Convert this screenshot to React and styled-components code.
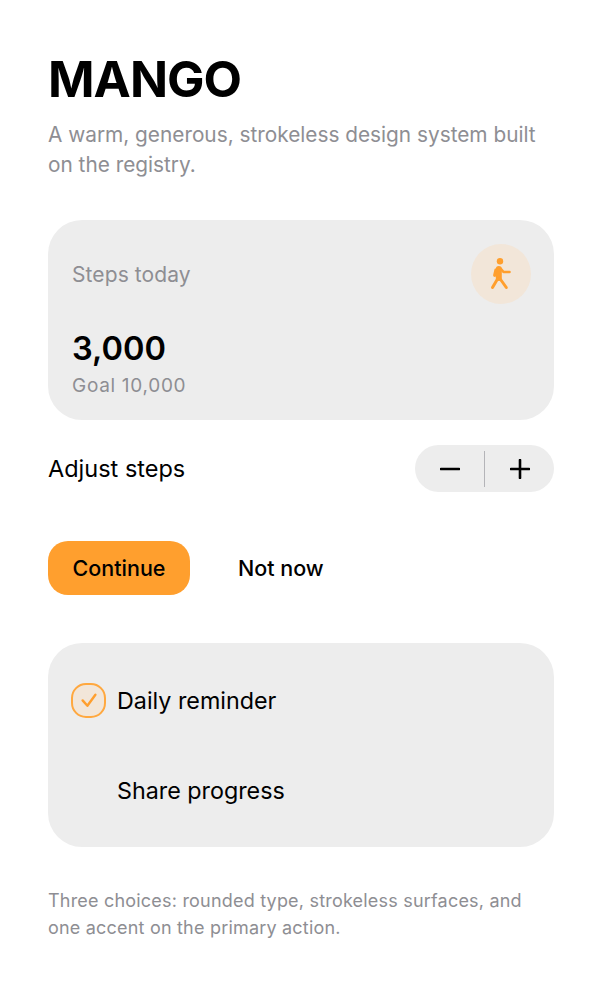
import React from "react";
import styled, { createGlobalStyle } from "styled-components";

const Global = createGlobalStyle`
  html, body { margin: 0; background: #fff; }
  body { font-family: Inter, "Noto Sans", sans-serif; color: #000; }
`;
const Page = styled.main`
  width: 603px; box-sizing: border-box; padding: 48px 49px 0 48px;
  display: flex; flex-direction: column;
`;
const Title = styled.h1`
  margin: 0; font-size: 50px; line-height: 62px; font-weight: 700; letter-spacing: -1px;
`;
const Subtitle = styled.p`
  margin: 10px 0 0; font-size: 20.8px; line-height: 30px; color: #8e8e93;
`;
const Card = styled.section`
  background: #ededed; border-radius: 34px; box-sizing: border-box;
`;
const StatCard = styled(Card)`
  margin-top: 40px; height: 200px; padding: 24px 23px 24px 24px;
  display: flex; flex-direction: column;
`;
const StatTop = styled.div`
  display: flex; justify-content: space-between; align-items: center;
`;
const StatLabel = styled.span`
  font-size: 21px; letter-spacing: 0.1px; color: #8e8e93;
`;
const IconCircle = styled.div`
  width: 60px; height: 60px; border-radius: 50%; background: #f2e6d9;
  display: flex; align-items: center; justify-content: center;
`;
const StatValue = styled.div`
  margin-top: 23px; font-size: 32.6px; line-height: 42px; font-weight: 600;
`;
const StatGoal = styled.div`
  margin-top: 4px; font-size: 19px; line-height: 26px; letter-spacing: 0.7px; color: #8e8e93;
`;
const AdjustRow = styled.div`
  margin-top: 25px; height: 47px; display: flex; align-items: center; justify-content: space-between;
`;
const AdjustLabel = styled.span`
  font-size: 23.5px;
`;
const Stepper = styled.div`
  width: 139px; height: 47px; border-radius: 24px; background: #ededed;
  display: flex; align-items: center; position: relative;
`;
const StepButton = styled.div`
  flex: 1; display: flex; align-items: center; justify-content: center;
`;
const StepDivider = styled.div`
  width: 1px; height: 36px; background: #b4b4b8;
`;
const Actions = styled.div`
  margin-top: 49px; display: flex; align-items: center; gap: 48px;
`;
const Primary = styled.div`
  width: 142px; height: 54px; border-radius: 20px; background: #ff9f2e;
  display: flex; align-items: center; justify-content: center;
  font-size: 21.5px; font-weight: 500;
`;
const Secondary = styled.div`
  font-size: 21.5px; font-weight: 500;
`;
const ChoiceCard = styled(Card)`
  margin-top: 48px; height: 204px; padding: 12px 24px 0;
  display: flex; flex-direction: column;
`;
const Choice = styled.div`
  height: 90px; display: flex; align-items: center; gap: 11px; font-size: 23.3px;
  padding-left: ${p => (p.$checked ? 0 : 45)}px;
`;
const Check = styled.div`
  width: 35px; height: 35px; margin-left: -1px; box-sizing: border-box; border-radius: 15px;
  background: #f2e6d9; border: 2px solid #ffa83f;
  display: flex; align-items: center; justify-content: center;
`;
const Footer = styled.p`
  margin: 40px 0 0; max-width: 490px; font-size: 18px; line-height: 27px; letter-spacing: 0.2px; color: #8e8e93;
`;

const Minus = () => (
  <svg width="20" height="20" viewBox="0 0 20 20"><path d="M1 10h18" stroke="#000" strokeWidth="2.6" strokeLinecap="round" /></svg>
);
const Plus = () => (
  <svg width="20" height="20" viewBox="0 0 20 20"><path d="M1 10h18M10 1v18" stroke="#000" strokeWidth="2.6" strokeLinecap="round" /></svg>
);
const Walker = () => (
  <svg width="32" height="42" viewBox="0 1 32 42" fill="none" stroke="#ff9f2e" strokeLinecap="round" strokeLinejoin="round">
    <circle cx="15" cy="9.3" r="3.2" fill="#ff9f2e" stroke="none" />
    <path d="M13.8 17v9" strokeWidth="6" />
    <path d="M10.8 18l-1.2 5.4" strokeWidth="3" />
    <path d="M16 17l2.5 3h6" strokeWidth="2.6" />
    <path d="M12.5 27l-5 8.5" strokeWidth="3" />
    <path d="M14.5 26l6.8 9.5" strokeWidth="3" />
  </svg>
);

export default function App() {
  return (
    <Page>
      <Global />
      <Title>MANGO</Title>
      <Subtitle>A warm, generous, strokeless design system built on the registry.</Subtitle>
      <StatCard>
        <StatTop>
          <StatLabel>Steps today</StatLabel>
          <IconCircle><Walker /></IconCircle>
        </StatTop>
        <StatValue>3,000</StatValue>
        <StatGoal>Goal 10,000</StatGoal>
      </StatCard>
      <AdjustRow>
        <AdjustLabel>Adjust steps</AdjustLabel>
        <Stepper>
          <StepButton><Minus /></StepButton>
          <StepDivider />
          <StepButton><Plus /></StepButton>
        </Stepper>
      </AdjustRow>
      <Actions>
        <Primary>Continue</Primary>
        <Secondary>Not now</Secondary>
      </Actions>
      <ChoiceCard>
        <Choice $checked>
          <Check>
            <svg width="18" height="18" viewBox="0 0 18 18" fill="none"><path d="M2.6 9.4l4.8 5.4 8-11" stroke="#ff9f2e" strokeWidth="2.4" strokeLinecap="round" strokeLinejoin="round" /></svg>
          </Check>
          Daily reminder
        </Choice>
        <Choice>Share progress</Choice>
      </ChoiceCard>
      <Footer>Three choices: rounded type, strokeless surfaces, and one accent on the primary action.</Footer>
    </Page>
  );
}
